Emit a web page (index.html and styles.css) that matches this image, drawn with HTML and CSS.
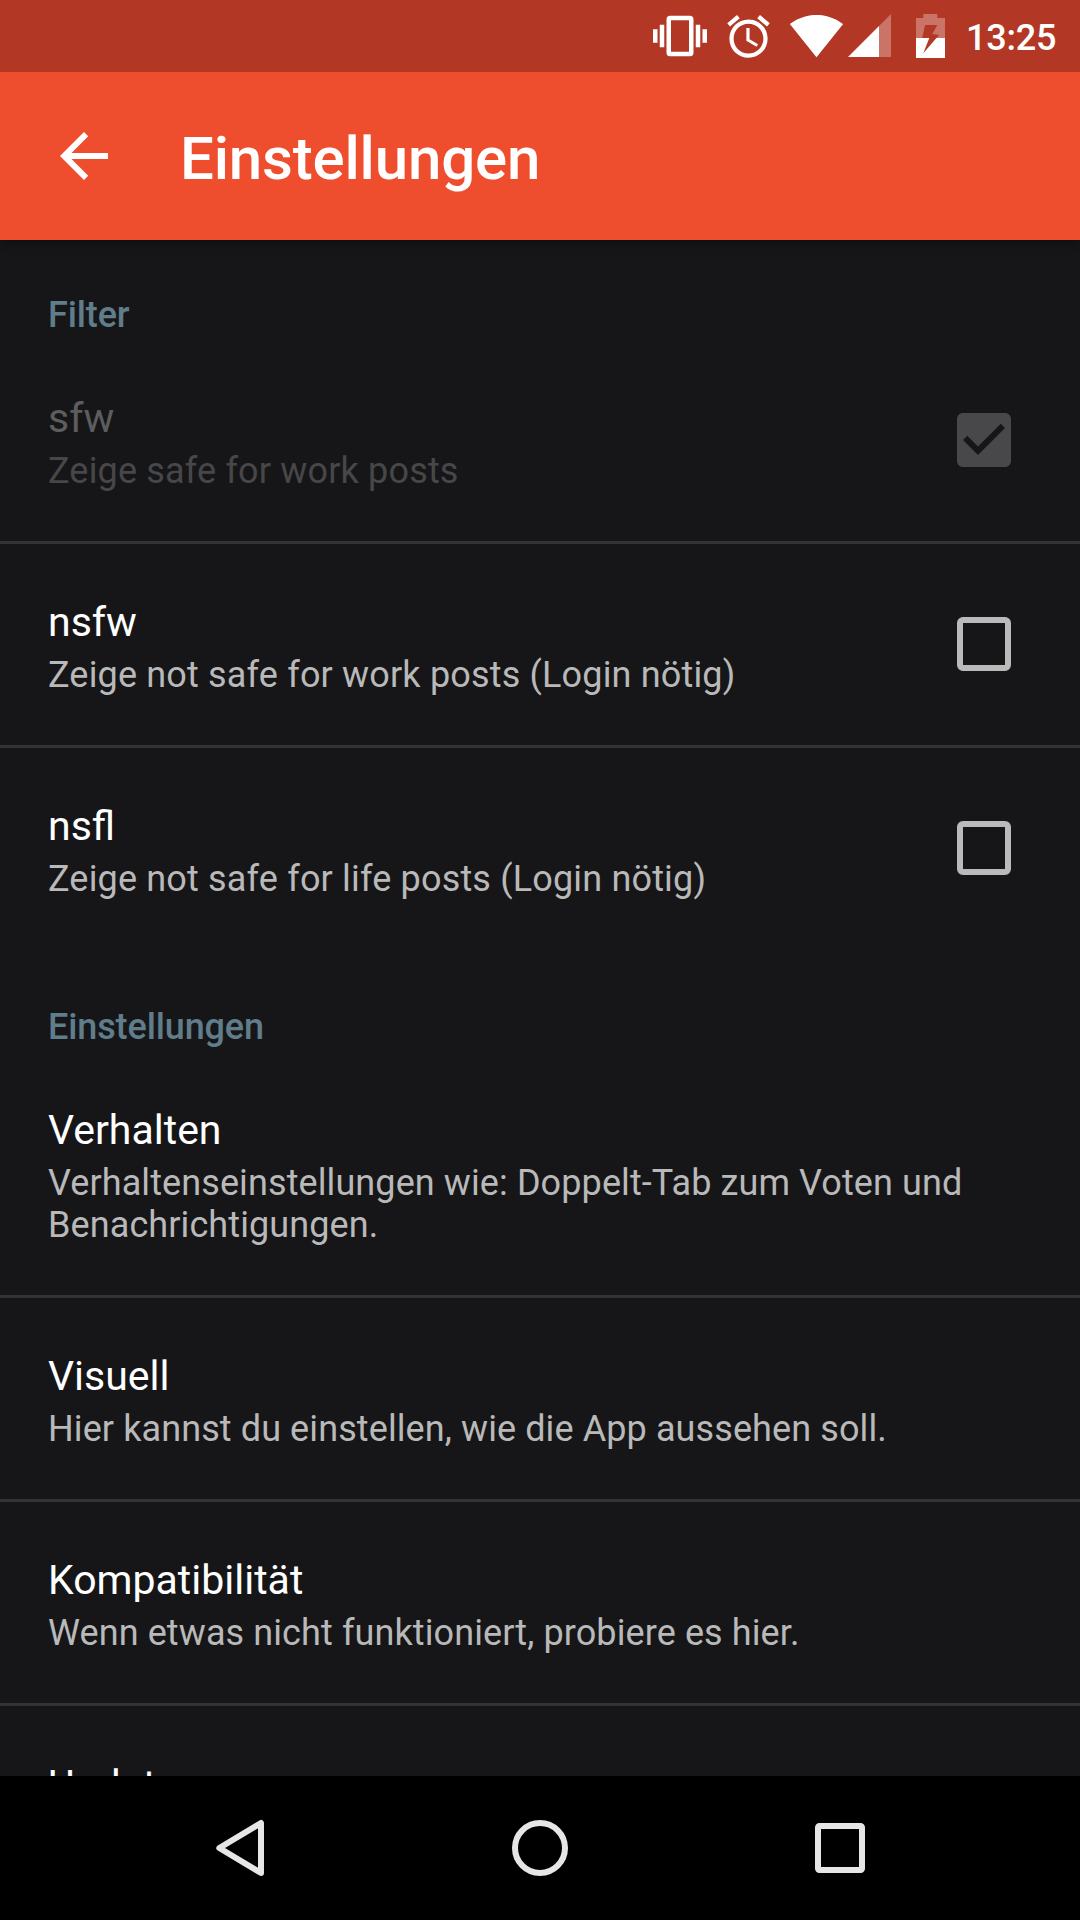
FILE: index.html
```html
<!DOCTYPE html>
<html lang="de">
<head>
<meta charset="utf-8">
<title>Einstellungen</title>
<link rel="stylesheet" href="styles.css">
</head>
<body>
<div class="screen">
  <div class="status-bar">
    <svg class="icon-vibrate" viewBox="0 0 24 24"><path d="M0 15h2V9H0v6zm3 2h2V7H3v10zm19-8v6h2V9h-2zm-3 8h2V7h-2v10zM16.5 3h-9C6.67 3 6 3.67 6 4.5v15c0 .83.67 1.5 1.5 1.5h9c.83 0 1.5-.67 1.5-1.5v-15c0-.83-.67-1.5-1.5-1.5zM16 19H8V5h8v14z"/></svg>
    <svg class="icon-alarm" viewBox="0 0 24 24"><path d="M22 5.72l-4.6-3.86-1.29 1.53 4.6 3.86L22 5.72zM7.88 3.39L6.6 1.86 2 5.71l1.29 1.53 4.59-3.85zM12.5 8H11v6l4.75 2.85.75-1.23-4-2.37V8zM12 4c-4.97 0-9 4.03-9 9s4.02 9 9 9c4.97 0 9-4.03 9-9s-4.03-9-9-9zm0 16c-3.87 0-7-3.13-7-7s3.13-7 7-7 7 3.13 7 7-3.13 7-7 7z"/></svg>
    <svg class="icon-wifi" viewBox="0 0 24 24"><path d="M12.01 21.49L23.64 7c-.45-.34-4.93-4-11.64-4C5.28 3 .81 6.66.36 7l11.63 14.49.01.01.01-.01z"/></svg>
    <svg class="icon-signal" viewBox="0 0 43 43"><path class="faded" d="M31 12L43 0V43H31z"/><path d="M0 43L31 12V43z"/></svg>
    <svg class="icon-battery" viewBox="0 0 29 44"><path class="faded" d="M0 4H7.3V0H21.3V4H29V24H20.4L23 21L16.3 20L21.3 11H9L6.3 24H0z"/><path d="M0 24H13.3L7.3 39.3L20.4 24H29V44H0z"/></svg>
    <span class="clock">13:25</span>
  </div>
  <header class="toolbar">
    <svg class="icon-back" viewBox="0 0 24 24"><path d="M20 11H7.83l5.59-5.59L12 4l-8 8 8 8 1.41-1.41L7.83 13H20v-2z"/></svg>
    <h1 class="toolbar-title">Einstellungen</h1>
  </header>
  <main class="settings">
    <h2 class="section-title section-first">Filter</h2>
    <div class="row disabled">
      <div class="row-text"><div class="title">sfw</div><div class="summary summary-wide">Zeige safe for work posts</div></div>
      <svg class="check" viewBox="3 3 18 18"><path d="M19 3H5c-1.11 0-2 .9-2 2v14c0 1.1.89 2 2 2h14c1.11 0 2-.9 2-2V5c0-1.1-.89-2-2-2zm-9 14l-5-5 1.41-1.41L10 14.17l7.59-7.59L19 8l-9 9z"/></svg>
    </div>
    <div class="row">
      <div class="row-text"><div class="title">nsfw</div><div class="summary summary-wide">Zeige not safe for work posts (Login nötig)</div></div>
      <div class="check box"></div>
    </div>
    <div class="row last">
      <div class="row-text"><div class="title">nsfl</div><div class="summary summary-wide">Zeige not safe for life posts (Login nötig)</div></div>
      <div class="check box"></div>
    </div>
    <h2 class="section-title">Einstellungen</h2>
    <div class="row tall">
      <div class="row-text"><div class="title">Verhalten</div><div class="summary">Verhaltenseinstellungen wie: Doppelt-Tab zum Voten und Benachrichtigungen.</div></div>
    </div>
    <div class="row">
      <div class="row-text"><div class="title">Visuell</div><div class="summary">Hier kannst du einstellen, wie die App aussehen soll.</div></div>
    </div>
    <div class="row">
      <div class="row-text"><div class="title">Kompatibilität</div><div class="summary">Wenn etwas nicht funktioniert, probiere es hier.</div></div>
    </div>
    <div class="row last">
      <div class="row-text"><div class="title">Updates</div></div>
    </div>
  </main>
  <nav class="nav-bar">
    <svg class="nav-icon" viewBox="0 0 80 80"><path d="M61 15V65L19.3 40z"/></svg>
    <svg class="nav-icon" viewBox="0 0 80 80"><circle cx="40" cy="40" r="25"/></svg>
    <svg class="nav-icon" viewBox="0 0 80 80"><rect x="18" y="18" width="44" height="44" rx="1.5"/></svg>
  </nav>
</div>
</body>
</html>
```
FILE: styles.css
```css
* { box-sizing: border-box; }
body { margin: 0; background: #000; font-family: Roboto, "Liberation Sans", sans-serif; }
.screen { width: 1080px; height: 1920px; display: flex; flex-direction: column; overflow: hidden; }
svg { display: block; flex: none; }

.status-bar { flex: none; height: 72px; background: #b23825; color: #fff; display: flex; align-items: flex-start; padding-left: 653px; position: relative; z-index: 2; }
.status-bar svg { fill: #fff; }
.icon-vibrate { width: 54px; height: 54px; margin-top: 9px; }
.icon-alarm { width: 51px; height: 51px; margin: 11px 0 0 16px; }
.icon-wifi { width: 55px; height: 55px; margin: 8px 0 0 15px; }
.icon-signal { width: 43px; height: 43px; margin: 14px 0 0 4px; }
.icon-battery { width: 29px; height: 44px; margin: 14px 0 0 25px; }
.faded { opacity: .3; }
.clock { font-size: 36px; font-weight: 500; line-height: 42px; letter-spacing: -.2px; margin: 17px 0 0 21px; }

.toolbar { flex: none; height: 168px; background: #ee4d2e; display: flex; align-items: center; padding-left: 48px; position: relative; z-index: 1; box-shadow: 0 2px 10px rgba(0, 0, 0, .4); }
.icon-back { width: 72px; height: 72px; fill: #fff; }
.toolbar-title { margin: 5px 0 0 60px; font-size: 60px; font-weight: 500; line-height: 70px; letter-spacing: -.18px; color: #fff; }

.settings { flex: 1; min-height: 0; overflow: hidden; background: #161618; }
.section-title { margin: 0; height: 102px; padding: 57px 48px 0; font-size: 36px; font-weight: 500; line-height: 42px; letter-spacing: -.12px; color: #607d8b; }
.section-first { height: 100px; padding-top: 54px; }
.row { display: flex; align-items: center; height: 204px; padding: 0 69px 2px 48px; border-bottom: 3px solid #333335; }
.row.last { height: 201px; border-bottom: 0; }
.row.tall { height: 247px; }
.row-text { flex: 1; align-self: flex-start; padding-top: 53px; }
.tall .row-text, .last:last-child .row-text { padding-top: 54px; }
.title { font-size: 41px; line-height: 50px; color: #fff; }
.summary { margin-top: 7px; font-size: 36px; line-height: 42px; letter-spacing: .1px; color: #b9b9ba; }
.summary-wide { letter-spacing: .17px; }
.disabled .title { color: #5d5d5e; }
.disabled .summary { color: #474749; }
.check { flex: none; width: 54px; height: 54px; fill: #48484a; }
.box { border: 6px solid #bababa; border-radius: 6px; }

.nav-bar { flex: none; height: 144px; background: #000; display: flex; align-items: center; justify-content: center; gap: 220px; }
.nav-icon { width: 80px; height: 80px; fill: none; stroke: #e6e6e6; stroke-width: 6; stroke-linejoin: round; }
```
